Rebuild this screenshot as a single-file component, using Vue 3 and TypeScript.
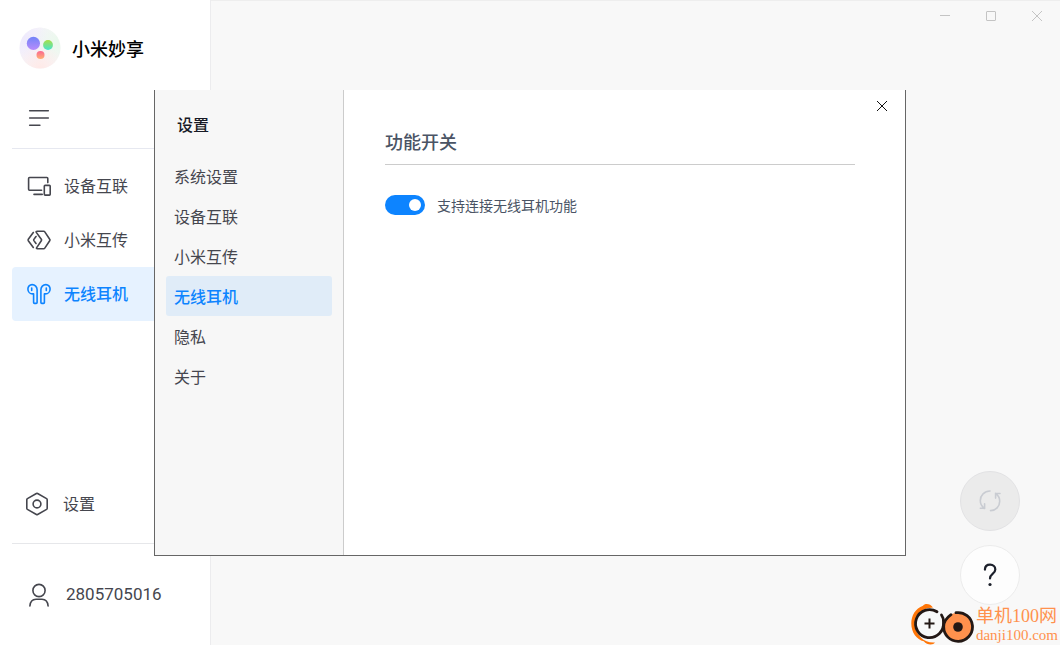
<script setup lang="ts">
import { ref } from 'vue'

type NavKey = 'devices' | 'transfer' | 'earphones'

const navItems: { key: NavKey; label: string }[] = [
  { key: 'devices', label: '设备互联' },
  { key: 'transfer', label: '小米互传' },
  { key: 'earphones', label: '无线耳机' },
]
const menuItems: string[] = ['系统设置', '设备互联', '小米互传', '无线耳机', '隐私', '关于']

const activeNav = ref<NavKey>('earphones')
const activeMenu = ref('无线耳机')
const dialogOpen = ref(true)
const earphonesEnabled = ref(true)
const account = '2805705016'
</script>

<template>
  <div class="app">
    <aside class="sidebar">
      <header class="brand">
        <svg class="brand-logo" viewBox="0 0 42 42" aria-hidden="true">
          <defs>
            <linearGradient id="violet" x1="0" y1="0" x2="0" y2="1">
              <stop offset="0" stop-color="#7284f8" />
              <stop offset="1" stop-color="#b88bfb" />
            </linearGradient>
            <linearGradient id="green" x1="0" y1="0" x2="0" y2="1">
              <stop offset="0" stop-color="#a6df48" />
              <stop offset="1" stop-color="#48e4ce" />
            </linearGradient>
            <linearGradient id="coral" x1="0" y1="0" x2="0" y2="1">
              <stop offset="0" stop-color="#fb6792" />
              <stop offset="1" stop-color="#ffb173" />
            </linearGradient>
            <radialGradient id="tintViolet" cx="0.1" cy="0.25" r="0.75">
              <stop offset="0" stop-color="#eeeafd" />
              <stop offset="1" stop-color="#eeeafd" stop-opacity="0" />
            </radialGradient>
            <radialGradient id="tintGreen" cx="0.95" cy="0.35" r="0.6">
              <stop offset="0" stop-color="#e9f9ec" />
              <stop offset="1" stop-color="#e9f9ec" stop-opacity="0" />
            </radialGradient>
            <radialGradient id="tintCoral" cx="0.5" cy="1" r="0.6">
              <stop offset="0" stop-color="#ffe9e7" />
              <stop offset="1" stop-color="#ffe9e7" stop-opacity="0" />
            </radialGradient>
          </defs>
          <circle cx="21" cy="21" r="20.5" fill="#f8f6f8" />
          <circle cx="21" cy="21" r="20.5" fill="url(#tintViolet)" />
          <circle cx="21" cy="21" r="20.5" fill="url(#tintGreen)" />
          <circle cx="21" cy="21" r="20.5" fill="url(#tintCoral)" />
          <circle cx="14.4" cy="16.4" r="6.6" fill="url(#violet)" />
          <circle cx="29" cy="18" r="4.9" fill="url(#green)" />
          <circle cx="21.5" cy="28" r="4" fill="url(#coral)" />
        </svg>
        <h1 class="brand-name">小米妙享</h1>
      </header>

      <div class="collapse-row">
        <button class="plain" type="button" aria-label="折叠菜单">
          <svg class="icon" viewBox="0 0 24 24">
            <path d="M2.7 4.7h18.6M2.7 12h18.6M2.7 19.2h10.2" />
          </svg>
        </button>
      </div>

      <nav class="nav">
        <button
          v-for="item in navItems"
          :key="item.key"
          type="button"
          class="nav-item"
          :class="{ active: item.key === activeNav }"
          @click="activeNav = item.key"
        >
          <svg v-if="item.key === 'devices'" class="icon" viewBox="0 0 24 24">
            <path d="M14.600 16.200H2.500a.9.900 0 0 1-.9-.9V4.400a.9.900 0 0 1 .9-.9h17.400a.9.900 0 0 1 .9.900v4.200M7 20.400h8.200" />
            <rect x="17.300" y="11.400" width="5.900" height="9.700" rx="0.800" />
          </svg>
          <svg v-else-if="item.key === 'transfer'" class="icon" viewBox="0 0 24 24">
            <path d="M6.300 4.500 1.300 11.300Q.9 12 1.300 12.700l5 6.800M9 8.500l-2.100 2.900q-.4.600 0 1.200L9 15.500" />
            <path d="M10.100 3.300h6.600q.7 0 1.100.6l4.900 7.400q.5.700 0 1.400l-4.900 7.400q-.4.600-1.100.6H10.300q-1.300 0-.6-1.100l4.600-6.900q.5-.7 0-1.400L9.300 4.400q-.5-1.100.8-1.100z" />
          </svg>
          <svg v-else class="icon" viewBox="0 0 24 24">
            <path d="M6.600 11.900v8.600q0 .900.900.900h1.700q.900 0 .900-.900V7.700a5 5 0 0 0-5-5.100A4.200 4.200 0 0 0 .9 6.900c0 3 2.100 5 4.700 5h1" />
            <path d="M17.400 11.900v8.600q0 .900-.900.900h-1.700q-.900 0-.900-.9V7.700a5 5 0 0 1 5-5.100 4.200 4.200 0 0 1 4.200 4.300c0 3-2.100 5-4.700 5zM4.700 6v2.500M19.300 6v2.500" />
          </svg>
          <span class="nav-label">{{ item.label }}</span>
        </button>
      </nav>

      <div class="settings-row">
        <button class="nav-item" type="button" @click="dialogOpen = true">
          <svg class="icon" viewBox="0 0 24 24">
            <path d="M11.400 1.500q.6-.3 1.200 0l9 5.100q.600.400.600 1.100v8.600q0 .700-.600 1.100l-9 5.100q-.600.300-1.200 0l-9-5.100q-.600-.400-.600-1.100V7.700q0-.700.600-1.100z" />
            <circle cx="12" cy="12" r="3.900" />
          </svg>
          <span class="nav-label">设置</span>
        </button>
      </div>

      <button class="account" type="button">
        <svg class="icon" viewBox="0 0 24 24">
          <circle cx="12" cy="7.500" r="6.100" />
          <path d="M2.900 23c.3-4.300 2.700-6.800 6.100-6.800h6c3.400 0 5.800 2.500 6.100 6.800" />
        </svg>
        <span class="nav-label">{{ account }}</span>
      </button>
    </aside>

    <main class="stage">
      <div class="titlebar">
        <button class="window-btn" type="button" aria-label="最小化">
          <svg viewBox="0 0 12 12"><path d="M1 5.500h10" /></svg>
        </button>
        <button class="window-btn" type="button" aria-label="最大化">
          <svg viewBox="0 0 12 12"><rect x="1.500" y="1.500" width="9" height="9" rx="0.500" /></svg>
        </button>
        <button class="window-btn" type="button" aria-label="关闭窗口">
          <svg viewBox="0 0 12 12"><path d="m1 1 10 10M11 1 1 11" /></svg>
        </button>
      </div>
      <div class="fabs">
        <button class="fab muted" type="button" aria-label="刷新" disabled>
          <svg viewBox="0 0 24 24">
            <path d="M12 2C6.400 2 2.300 6.300 2.300 11.600c0 3.200 1.500 6 4.100 7.900M2.300 19.300h4.300v-4.600M12.500 21.600c5.300 0 9.200-4.200 9.200-9.400 0-3.200-1.500-6-4.100-7.900M22 4.500h-4.400v4.600" />
          </svg>
        </button>
        <button class="fab" type="button" aria-label="帮助">
          <svg viewBox="0 0 24 24">
            <path d="M6.900 6.600c.1-3 2.100-4.900 5.200-4.900s5.200 1.900 5.200 4.700c0 2.100-1.100 3.200-2.700 4.500-1.700 1.400-2.600 2.400-2.600 4.600" />
            <circle class="dot" cx="12" cy="21.500" r="1.600" />
          </svg>
        </button>
      </div>
    </main>

    <div v-if="dialogOpen" class="overlay">
      <section class="dialog" role="dialog" aria-labelledby="dialog-title">
        <div class="dialog-side">
          <h2 id="dialog-title" class="dialog-title">设置</h2>
          <button
            v-for="label in menuItems"
            :key="label"
            type="button"
            class="menu-item"
            :class="{ active: label === activeMenu }"
            @click="activeMenu = label"
          >
            {{ label }}
          </button>
        </div>
        <div class="dialog-body">
          <button class="dialog-close" type="button" aria-label="关闭" @click="dialogOpen = false">
            <svg viewBox="0 0 12 12"><path d="m1 1 10 10M11 1 1 11" /></svg>
          </button>
          <h3 class="section-title">功能开关</h3>
          <label class="switch-row">
            <input v-model="earphonesEnabled" class="switch" type="checkbox" />
            <span>支持连接无线耳机功能</span>
          </label>
        </div>
      </section>
    </div>

    <div class="watermark">
      <svg class="mark" viewBox="0 -1 64 44" aria-hidden="true">
        <path d="M23 5.500C20 1 14.500 1.200 13 3.800 5.500 6.500 1.300 13.500 1.300 21.500c0 9 5.400 16.300 12.500 17.700 3.200 4 9.500 4 11.200 1.300-10 1-19.500-6.500-19.500-18.500C5.500 12.500 11 6 23 5.500z" fill="#ff7608" />
        <path d="M32.500 14.500C29.500 8.500 24 6 18.500 6.500 10.500 7.500 4.800 13.500 4.800 22S11 37 19.200 37c9 0 14-7 14-13.500L31 12" fill="#f8f8f8" />
        <path d="M27 9.800A14 14 0 1 0 33.500 20.500Q34 16.500 31.500 13" fill="none" stroke="#231815" stroke-width="2.800" stroke-linecap="round" />
        <circle cx="48" cy="25" r="14.300" fill="#ff914d" />
        <path d="M46 10.700A14.400 14.400 0 1 1 33.700 24.500q0-6.500 7.300-11.800" fill="none" stroke="#231815" stroke-width="2.800" stroke-linecap="round" />
        <circle cx="48" cy="25" r="4.800" fill="#231815" />
        <path d="M19.500 16.500v10M14.500 21.500h10" stroke="#231815" stroke-width="2" />
      </svg>
      <div class="mark-text">
        <span class="mark-name">单机100网</span>
        <span class="mark-site">danji100.com</span>
      </div>
    </div>
  </div>
</template>

<style>
body {
  margin: 0;
}
</style>

<style scoped>
.app {
  position: relative;
  display: flex;
  min-height: 100vh;
  background: #f8f8f8;
  color: #45464e;
  font: 16px/24px "Noto Sans CJK SC", sans-serif;
}

button {
  margin: 0;
  padding: 0;
  border: 0;
  background: none;
  color: inherit;
  font: inherit;
  cursor: pointer;
}

h1,
h2,
h3 {
  margin: 0;
  font-weight: 500;
}

svg {
  display: block;
  flex: none;
  fill: none;
}

.icon {
  width: 24px;
  height: 24px;
  stroke: currentColor;
  stroke-width: 1.6;
  stroke-linecap: round;
  stroke-linejoin: round;
}

.sidebar {
  box-sizing: border-box;
  width: 211px;
  flex: none;
  display: flex;
  flex-direction: column;
  padding-left: 12px;
  border-right: 1px solid #ececee;
  background: #fff;
}

.brand {
  display: flex;
  align-items: center;
  gap: 11px;
  height: 96px;
  padding-left: 7px;
}

.brand-logo {
  width: 42px;
  height: 42px;
}

.brand-name {
  color: #000;
  font-size: 18px;
  line-height: 28px;
}

.collapse-row {
  height: 42px;
  padding: 10px 0 0 15px;
  border-bottom: 1px solid #e6e8f0;
}

.nav {
  display: flex;
  flex-direction: column;
  padding-top: 10px;
}

.nav-item {
  display: flex;
  align-items: center;
  gap: 13px;
  width: 100%;
  height: 54px;
  padding-left: 15px;
  border-radius: 4px;
}

.nav-label {
  padding-bottom: 2px;
}

.nav-item.active {
  background: #e6f2ff;
  color: #0d84ff;
  font-weight: 500;
}

.settings-row {
  margin-top: auto;
  padding-bottom: 12px;
  border-bottom: 1px solid #e6e7ea;
}

.settings-row .nav-item {
  padding-left: 13px;
  gap: 14px;
}

.account {
  display: flex;
  align-items: center;
  gap: 15px;
  height: 101px;
  padding-left: 15px;
  font-family: Roboto, sans-serif;
  font-size: 17px;
}

.stage {
  flex: 1;
  display: flex;
  flex-direction: column;
  justify-content: space-between;
  border-top: 1px solid #eee;
}

.titlebar {
  display: flex;
  justify-content: flex-end;
}

.window-btn {
  display: grid;
  place-items: center;
  width: 46px;
  height: 30px;
}

.window-btn svg,
.dialog-close svg {
  width: 12px;
  height: 12px;
  stroke: #c4c4c4;
}

.fabs {
  display: flex;
  flex-direction: column;
  align-items: flex-end;
  gap: 14px;
  padding: 0 40px 40px 0;
}

.fab {
  display: grid;
  place-items: center;
  box-sizing: border-box;
  width: 60px;
  height: 60px;
  border: 1px solid #ececec;
  border-radius: 50%;
  background: #fdfdfd;
  color: #1c202b;
}

.fab.muted {
  border-color: #e2e2e4;
  background: #ebebeb;
  color: #c9ccd2;
}

.fab svg {
  width: 24px;
  height: 24px;
  stroke: currentColor;
  stroke-width: 2.2;
  stroke-linecap: round;
}

.fab.muted svg {
  stroke-width: 1.6;
}

.fab .dot {
  fill: currentColor;
  stroke: none;
}

.overlay {
  position: absolute;
  inset: 0;
  display: flex;
  padding: 90px 154px 89px;
}

.dialog {
  flex: 1;
  display: flex;
  border: 1px solid #666;
  border-top: 0;
  background: #fff;
}

.dialog-side {
  box-sizing: border-box;
  width: 189px;
  flex: none;
  display: flex;
  flex-direction: column;
  padding: 0 11px;
  border-right: 1px solid #ccc;
  background: #f7f7f7;
}

.dialog-title {
  padding: 22px 11px 20px;
  color: #171a26;
  font-size: 16px;
  line-height: 24px;
}

.menu-item {
  height: 40px;
  padding: 0 8px;
  border-radius: 3px;
  text-align: left;
}

.menu-item.active {
  background: #e0ecf8;
  color: #0d84ff;
  font-weight: 500;
}

.dialog-body {
  flex: 1;
  display: flex;
  flex-direction: column;
  padding: 0 50px 0 41px;
  color: #4a5465;
}

.dialog-close {
  display: grid;
  place-items: center;
  align-self: flex-end;
  width: 46px;
  height: 32px;
  margin-right: -50px;
}

.dialog .dialog-close svg {
  stroke: #111;
}

.section-title {
  padding: 5px 0 9px;
  border-bottom: 1px solid #ccc;
  font-size: 18px;
  line-height: 28px;
}

.switch-row {
  display: flex;
  align-items: center;
  align-self: flex-start;
  gap: 12px;
  margin-top: 28px;
  font-size: 14px;
  cursor: pointer;
}

.switch {
  appearance: none;
  display: flex;
  align-items: center;
  box-sizing: border-box;
  width: 40px;
  height: 20px;
  margin: 0;
  padding: 0 4px;
  border-radius: 10px;
  background: #c4c8cf;
  cursor: pointer;
}

.switch::before {
  content: "";
  width: 12px;
  height: 12px;
  border-radius: 50%;
  background: #fff;
}

.switch:checked {
  justify-content: flex-end;
  background: #0d84ff;
}

.watermark {
  position: absolute;
  right: 2px;
  bottom: 0;
  display: flex;
  align-items: center;
  gap: 2px;
  color: #ff914d;
  font-family: "Liberation Serif", "Noto Sans CJK SC", serif;
}

.mark {
  width: 64px;
  height: 44px;
}

.mark-text {
  display: flex;
  flex-direction: column;
  padding-top: 4px;
  white-space: nowrap;
}

.mark-name {
  font-size: 18px;
  line-height: 20px;
}

.mark-site {
  font-size: 15px;
  line-height: 18px;
}
</style>
